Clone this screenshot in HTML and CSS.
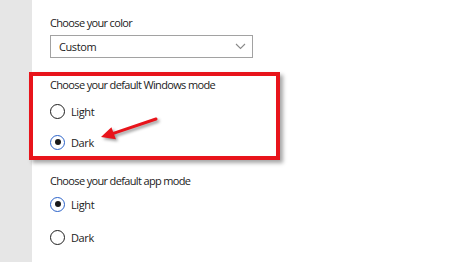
FILE: index.html
```html
<!DOCTYPE html>
<html>
<head>
<meta charset="utf-8">
<link rel="stylesheet" href="styles.css">
</head>
<body>
<div class="page">
  <div class="sidebar"></div>
  <div class="content">
    <div class="title t1">Choose your color</div>
    <div class="dropdown">
      <span>Custom</span>
      <svg class="chev" width="11" height="7" viewBox="0 0 11 7"><path d="M1 1 L5.5 5.5 L10 1" fill="none" stroke="#8a8a8a" stroke-width="1.1"/></svg>
    </div>
    <div class="highlight">
      <div class="title t2">Choose your default Windows mode</div>
      <div class="radio r1"><span class="dot"></span><span class="lbl">Light</span></div>
      <div class="radio r2 on"><span class="dot"></span><span class="lbl">Dark</span></div>
      <svg class="arrow" width="70" height="35" viewBox="0 0 70 35">
        <path d="M61 9 L18.4 23.3" stroke="#e8141b" stroke-width="3" stroke-linecap="round" fill="none"/>
        <path d="M6 27 L20.9 29.2 L16.4 17.2 Z" fill="#e8141b"/>
      </svg>
    </div>
    <div class="title t3">Choose your default app mode</div>
    <div class="radio r3 on"><span class="dot"></span><span class="lbl">Light</span></div>
    <div class="radio r4"><span class="dot"></span><span class="lbl">Dark</span></div>
  </div>
</div>
</body>
</html>
```
FILE: styles.css
```css
html, body { margin: 0; padding: 0; background: #fff; }
body { width: 474px; height: 262px; overflow: hidden; font-family: "Open Sans", "Noto Sans", sans-serif; color: #1b1b1b; }
.page { display: flex; height: 262px; }
.sidebar { width: 32px; flex: none; background: #e6e6e6; }
.content { flex: 1; padding-left: 18px; padding-top: 15px; }
.title { font-size: 11px; letter-spacing: -0.65px; line-height: 16px; height: 16px; white-space: nowrap; }
.dropdown { margin-top: 4px; width: 203px; height: 23px; box-sizing: border-box; border: 1.5px solid #a2a2a2; display: flex; align-items: center; justify-content: space-between; padding: 0 6px 0 8px; font-size: 11px; letter-spacing: -0.4px; }
.chev { display: block; }
.highlight { position: relative; margin-top: 14px; margin-left: -21px; width: 251px; box-sizing: border-box; border: 4px solid #e8141b; padding: 1px 0 2px 17px; box-shadow: 3px 3px 4px rgba(0,0,0,0.35); }
.radio { display: flex; align-items: center; height: 24px; font-size: 11px; letter-spacing: -0.4px; }
.r1 { margin-top: 6px; }
.r2 { margin-top: 7px; }
.t3 { margin-top: 13px; }
.r3 { margin-top: 3px; }
.r4 { margin-top: 9px; }
.dot { width: 15px; height: 15px; box-sizing: border-box; border: 1.5px solid #1e1e1e; border-radius: 50%; margin-right: 6px; display: flex; align-items: center; justify-content: center; }
.on .dot { border-color: #2a62c9; }
.on .dot::after { content: ""; width: 6px; height: 6px; border-radius: 50%; background: #1a1a1a; }
.arrow { position: absolute; left: 62px; top: 34px; filter: drop-shadow(2px 2px 1.5px rgba(0,0,0,0.4)); }
```
